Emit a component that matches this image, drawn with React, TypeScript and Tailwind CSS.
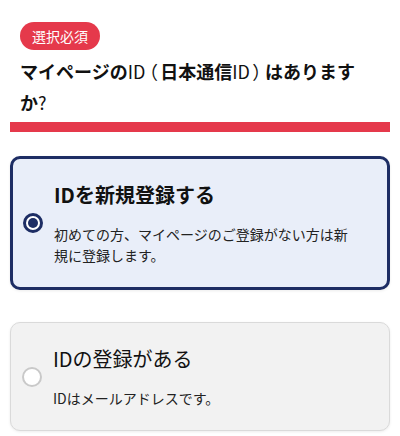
const font = "font-['Noto_Sans_CJK_JP','Noto_Sans',sans-serif]";

function Radio({ checked }: { checked: boolean }) {
  if (checked) {
    return (
      <span className="flex h-5 w-5 shrink-0 items-center justify-center rounded-full border-[3px] border-[#1d2d64] bg-white">
        <span className="h-[10px] w-[10px] rounded-full bg-[#1d2d64]" />
      </span>
    );
  }
  return <span className="h-5 w-5 shrink-0 rounded-full border-2 border-[#c9c9c9] bg-white" />;
}

interface OptionProps {
  title: string;
  description: string;
  checked: boolean;
}

function Option({ title, description, checked }: OptionProps) {
  return (
    <label
      className={
        checked
          ? 'flex items-center gap-[11px] rounded-[10px] border-[3px] border-[#1d2d64] bg-[#e9eef9] py-[21px] pl-[10px] pr-8 shadow-[0_1px_3px_rgba(0,0,0,0.08)]'
          : 'flex items-center gap-[11px] rounded-[10px] border border-[#dadada] bg-[#f2f2f2] py-[21px] pl-[11px] pr-8 shadow-[0_1px_3px_rgba(0,0,0,0.08)]'
      }
    >
      <Radio checked={checked} />
      <div className="flex flex-col gap-[14px]">
        <p className={checked ? 'text-[20px] font-bold leading-[30px] text-[#111]' : 'text-[20px] font-normal leading-[30px] text-[#111]'}>
          {title}
        </p>
        <p className="text-[14px] leading-[21px] text-[#222]">{description}</p>
      </div>
    </label>
  );
}

export default function App() {
  return (
    <div className={`min-h-[436px] bg-white px-[10px] pt-[22px] ${font}`}>
      <div className="px-[10px]">
        <span className="inline-flex h-7 items-center rounded-full bg-[#e5394b] px-3 text-[14px] text-white">選択必須</span>
        <h2 className="mt-[6px] text-[18px] font-bold leading-[31px] text-[#111]">
          マイページの
          <span className="font-normal">
            ID<span className="px-[3px] [font-feature-settings:'palt']">（</span>
          </span>
          日本通信
          <span className="font-normal">
            ID<span className="px-[3px] [font-feature-settings:'palt']">）</span>
          </span>
          はありますか<span className="font-normal">?</span>
        </h2>
      </div>
      <div className="mt-1 h-[10px] bg-[#e5394b]" />
      <div className="mt-6 flex flex-col gap-8">
        <Option
          checked
          title="IDを新規登録する"
          description="初めての方、マイページのご登録がない方は新規に登録します。"
        />
        <Option checked={false} title="IDの登録がある" description="IDはメールアドレスです。" />
      </div>
    </div>
  );
}
